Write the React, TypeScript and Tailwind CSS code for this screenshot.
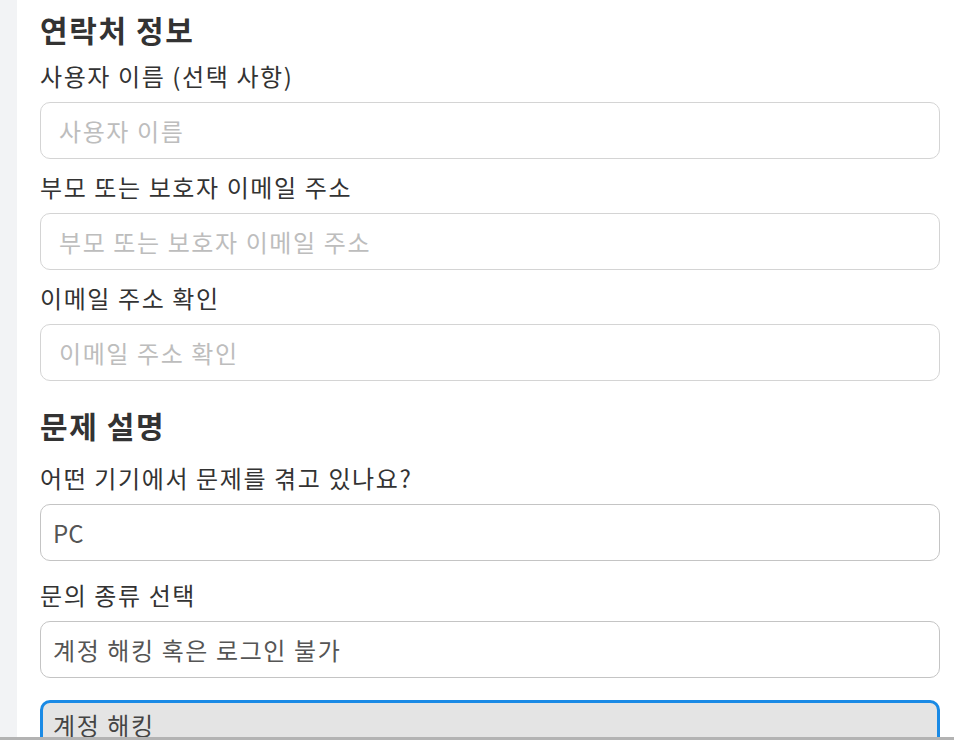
import React from "react";

const font = { fontFamily: '"Noto Sans CJK KR", "Noto Sans", sans-serif' };

function Label({ children, mb = "mb-[10px]" }: { children: React.ReactNode; mb?: string }) {
  return (
    <div className={`text-[24px] leading-[32px] tracking-[1.6px] text-[#333] ${mb}`}>{children}</div>
  );
}

function TextField({ placeholder }: { placeholder: string }) {
  return (
    <input
      placeholder={placeholder}
      className="w-full h-[57px] rounded-[10px] border border-[#d4d4d4] bg-white px-[18px] text-[24px] tracking-[1.6px] text-[#555] placeholder:text-[#bdbdbd] outline-none"
    />
  );
}

function SelectBox({ value, latin = false }: { value: string; latin?: boolean }) {
  return (
    <div
      className={`w-full h-[57px] rounded-[10px] border border-[#c4c4c4] bg-white px-[12px] flex items-center text-[24px] text-[#555] ${
        latin ? "tracking-normal" : "tracking-[1.6px]"
      }`}
    >
      {value}
    </div>
  );
}

export default function App() {
  return (
    <div className="h-[740px] w-[954px] overflow-hidden flex flex-col bg-white" style={font}>
      <div className="flex-1 flex min-h-0">
        <div className="w-[17px] bg-[#f2f3f5] shrink-0" />
        <div className="flex-1 pl-[23px] pr-[14px] pt-[9px] overflow-hidden">
          <h2 className="text-[30px] leading-[40px] tracking-[1.6px] font-bold text-[#333] mb-[11px]">연락처 정보</h2>
          <div className="flex flex-col gap-[12px]">
            <div>
              <Label>사용자 이름 (선택 사항)</Label>
              <TextField placeholder="사용자 이름" />
            </div>
            <div>
              <Label>부모 또는 보호자 이메일 주소</Label>
              <TextField placeholder="부모 또는 보호자 이메일 주소" />
            </div>
            <div>
              <Label>이메일 주소 확인</Label>
              <TextField placeholder="이메일 주소 확인" />
            </div>
          </div>
          <h2 className="text-[30px] leading-[40px] tracking-[1.6px] font-bold text-[#333] mt-[24px] mb-[17px]">문제 설명</h2>
          <div className="flex flex-col gap-[12px]">
            <div>
              <Label>어떤 기기에서 문제를 겪고 있나요?</Label>
              <SelectBox value="PC" latin />
            </div>
            <div className="pt-[6px]">
              <Label>문의 종류 선택</Label>
              <SelectBox value="계정 해킹 혹은 로그인 불가" />
            </div>
            <div className="pt-[10px]">
              <div className="w-full h-[80px] rounded-[10px] border-[3px] border-[#1a8ae5] bg-[#e4e4e4] px-[10px] pt-[6px] text-[24px] leading-[32px] tracking-[1.6px] text-[#444]">
                계정 해킹
              </div>
            </div>
          </div>
        </div>
      </div>
      <div className="h-[3px] bg-[#b3b3b3] shrink-0" />
    </div>
  );
}
